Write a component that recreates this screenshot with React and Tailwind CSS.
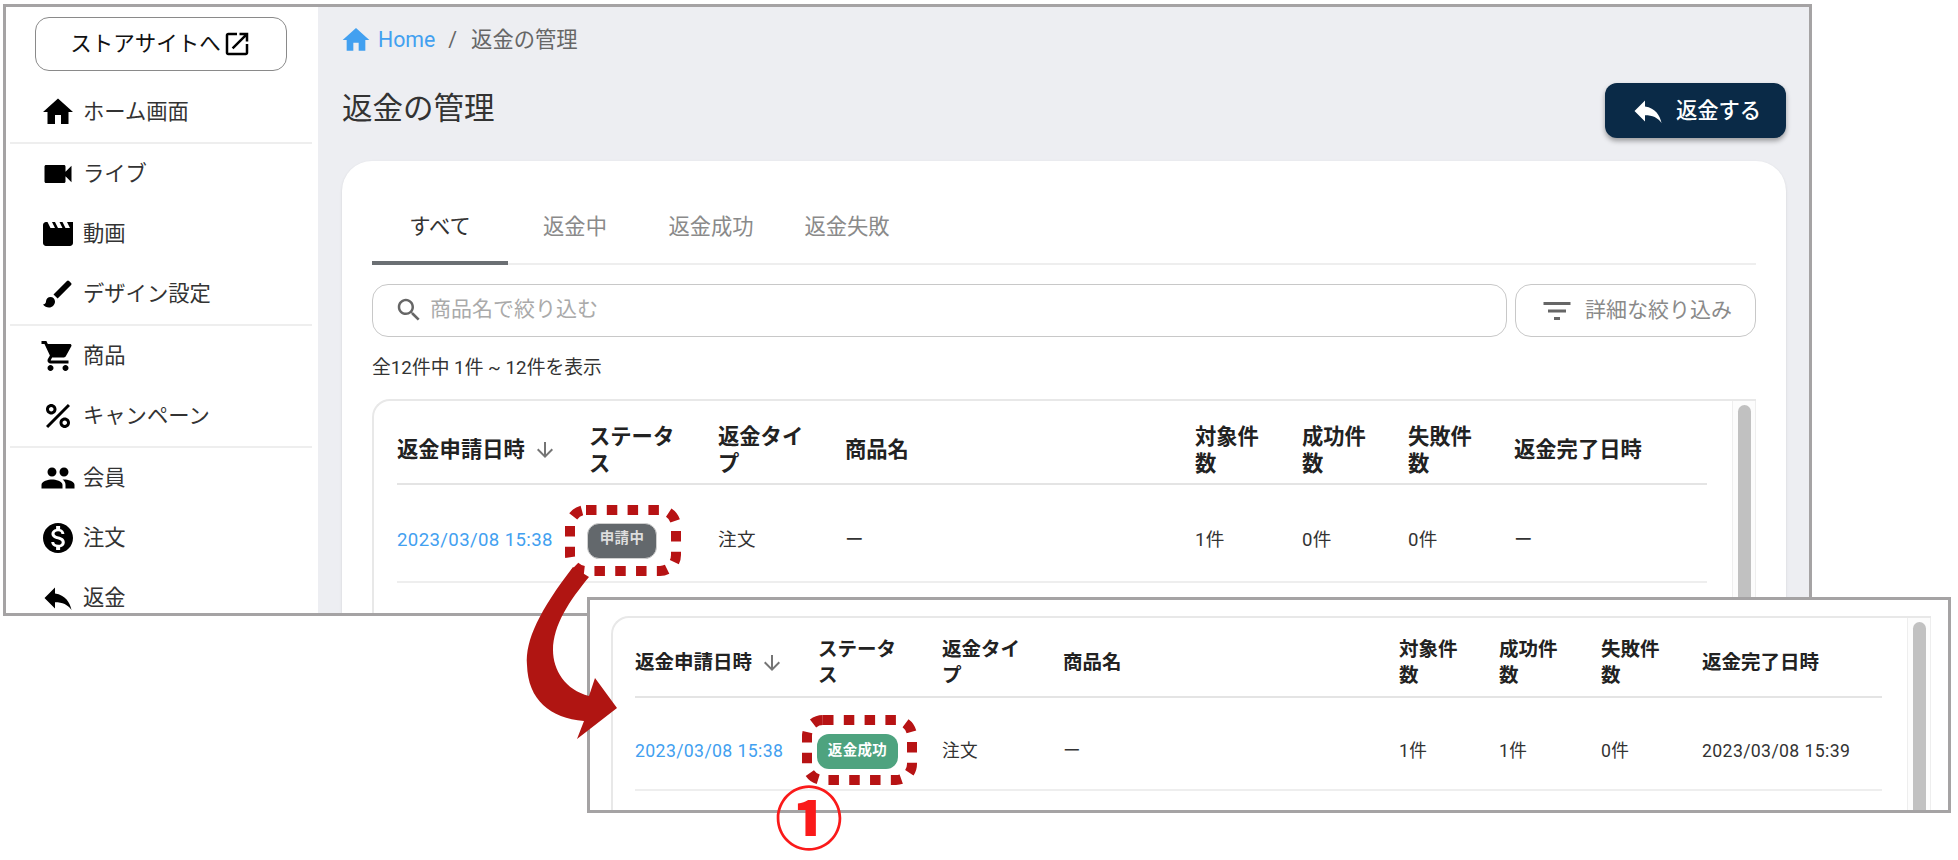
const paths = {
  home: 'M10 20v-6h4v6h5v-8h3L12 3 2 12h3v8z',
  video: 'M17 10.5V7c0-.55-.45-1-1-1H4c-.55 0-1 .45-1 1v10c0 .55.45 1 1 1h12c.55 0 1-.45 1-1v-3.5l4 4v-11l-4 4z',
  movie: 'M18 4l2 4h-3l-2-4h-2l2 4h-3l-2-4H8l2 4H7L5 4H4c-1.1 0-1.99.9-1.99 2L2 18c0 1.1.9 2 2 2h16c1.1 0 2-.9 2-2V4h-4z',
  brush: 'M7 14c-1.66 0-3 1.34-3 3 0 1.31-1.16 2-2 2 .92 1.22 2.49 2 4 2 2.21 0 4-1.79 4-4 0-1.66-1.34-3-3-3zm13.71-9.37l-1.34-1.34a.9959.9959 0 00-1.41 0L9 12.25 11.75 15l8.96-8.96c.39-.39.39-1.02 0-1.41z',
  cart: 'M7 18c-1.1 0-1.99.9-1.99 2S5.9 22 7 22s2-.9 2-2-.9-2-2-2zM1 2v2h2l3.6 7.59-1.35 2.45c-.16.28-.25.61-.25.96 0 1.1.9 2 2 2h12v-2H7.42c-.14 0-.25-.11-.25-.25l.03-.12.9-1.63h7.45c.75 0 1.41-.41 1.75-1.03l3.58-6.49c.08-.14.12-.31.12-.48 0-.55-.45-1-1-1H5.21l-.94-2H1zm16 16c-1.1 0-1.99.9-1.99 2s.89 2 1.99 2 2-.9 2-2-.9-2-2-2z',
  percent: 'M7.5 4C5.57 4 4 5.57 4 7.5S5.57 11 7.5 11 11 9.43 11 7.5 9.43 4 7.5 4zm0 5C6.67 9 6 8.33 6 7.5S6.67 6 7.5 6 9 6.67 9 7.5 8.33 9 7.5 9zm9 4c-1.93 0-3.5 1.57-3.5 3.5s1.57 3.5 3.5 3.5 3.5-1.57 3.5-3.5-1.57-3.5-3.5-3.5zm0 5c-.83 0-1.5-.67-1.5-1.5s.67-1.5 1.5-1.5 1.5.67 1.5 1.5-.67 1.5-1.5 1.5zM5.41 20L4 18.59 18.59 4 20 5.41 5.41 20z',
  people: 'M16 11c1.66 0 2.99-1.34 2.99-3S17.66 5 16 5c-1.66 0-3 1.34-3 3s1.34 3 3 3zm-8 0c1.66 0 2.99-1.34 2.99-3S9.66 5 8 5C6.34 5 5 6.34 5 8s1.34 3 3 3zm0 2c-2.33 0-7 1.17-7 3.5V19h14v-2.5c0-2.33-4.67-3.5-7-3.5zm8 0c-.29 0-.62.02-.97.05 1.16.84 1.97 1.97 1.97 3.45V19h6v-2.5c0-2.33-4.67-3.5-7-3.5z',
  money: 'M12 2C6.48 2 2 6.48 2 12s4.48 10 10 10 10-4.48 10-10S17.52 2 12 2zm1.41 16.09V20h-2.67v-1.93c-1.71-.36-3.16-1.46-3.27-3.4h1.96c.1 1.05.82 1.87 2.65 1.87 1.96 0 2.4-.98 2.4-1.59 0-.83-.44-1.61-2.67-2.14-2.48-.6-4.18-1.62-4.18-3.67 0-1.72 1.39-2.84 3.11-3.21V4h2.67v1.95c1.86.45 2.79 1.86 2.85 3.39H14.3c-.05-1.11-.64-1.87-2.22-1.87-1.5 0-2.4.68-2.4 1.64 0 .84.65 1.39 2.67 1.91s4.18 1.39 4.18 3.91c-.01 1.83-1.38 2.83-3.12 3.16z',
  reply: 'M10 9V5l-7 7 7 7v-4.1c5 0 8.5 1.6 11 5.1-1-5-4-10-11-11z',
  open: 'M19 19H5V5h7V3H5c-1.11 0-2 .9-2 2v14c0 1.1.89 2 2 2h14c1.1 0 2-.9 2-2v-7h-2v7zM14 3v2h3.59l-9.83 9.83 1.41 1.41L19 6.41V10h2V3h-7z',
  search: 'M15.5 14h-.79l-.28-.27C15.41 12.59 16 11.11 16 9.5 16 5.91 13.09 3 9.5 3S3 5.91 3 9.5 5.91 16 9.5 16c1.61 0 3.09-.59 4.23-1.57l.27.28v.79l5 4.99L20.49 19l-4.99-5zm-6 0C7.01 14 5 11.99 5 9.5S7.01 5 9.5 5 14 7.01 14 9.5 11.99 14 9.5 14z',
  filter: 'M10 18h4v-2h-4v2zM3 6v2h18V6H3zm3 7h12v-2H6v2z',
  down: 'M20 12l-1.41-1.41L13 16.17V4h-2v12.17l-5.58-5.59L4 12l8 8 8-8z',
};

function Icon({ name, className }) {
  return (
    <svg viewBox="0 0 24 24" fill="currentColor" className={className}>
      <path d={paths[name]} />
    </svg>
  );
}

const menu = [
  [['home', 'ホーム画面']],
  [['video', 'ライブ'], ['movie', '動画'], ['brush', 'デザイン設定']],
  [['cart', '商品'], ['percent', 'キャンペーン']],
  [['people', '会員'], ['money', '注文'], ['reply', '返金']],
];

function Sidebar() {
  return (
    <div className="w-[312px] shrink-0 bg-white">
      <div className="ml-[29px] mt-[10px] mb-[11px] flex h-[54px] w-[252px] items-center justify-center rounded-[14px] border border-[#8a8a8a] text-[21.5px] text-[#111]">
        ストアサイトへ
        <Icon name="open" className="ml-[1px] h-[30px] w-[30px] text-black" />
      </div>
      {menu.map((group, i) => (
        <div key={i} className={i < menu.length - 1 ? 'relative mb-[2px] after:absolute after:left-[4px] after:right-[6px] after:bottom-[-2px] after:h-[2px] after:bg-[#eeeeee]' : ''}>
          {group.map(([icon, label]) => (
            <div key={label} className="flex h-[60px] items-center gap-[7px] pl-[34px] text-[21.3px] text-[#333]">
              <Icon name={icon} className="h-[36px] w-[36px] text-black" />
              {label}
            </div>
          ))}
        </div>
      ))}
    </div>
  );
}

function Scrollbar() {
  return (
    <div className="h-[500px] w-[24px] shrink-0 border-x border-[#eeeeee] bg-[#fcfcfc] pt-[4px]">
      <div className="mx-auto h-[490px] w-[13px] rounded-full bg-[#c1c1c1]" />
    </div>
  );
}

function Badge({ className, children }) {
  return <span className={`inline-flex items-center justify-center rounded-[12px] font-bold ${className}`}>{children}</span>;
}

function RefundTable({ cols, headH, rowH, headText, cellText, status, counts, done }) {
  const heads = ['ステータス', '返金タイプ', '商品名', '対象件数', '成功件数', '失敗件数', '返金完了日時'];
  return (
    <div className="flex h-[500px] rounded-tl-[18px] border-2 border-r-0 border-[#e8e8e8]">
      <div className="flex-1 pl-[23px] pr-[25px]">
        <div className={`grid items-center border-b-2 border-[#e4e4e4] font-bold text-[#222] ${cols} ${headH} ${headText}`}>
          <div className="flex items-center gap-[8px]">
            返金申請日時
            <Icon name="down" className="h-[24px] w-[24px] text-[#757575]" />
          </div>
          {heads.map((h) => (
            <div key={h} className="pr-[30px]">{h}</div>
          ))}
        </div>
        <div className={`grid items-center border-b-2 border-[#eeeeee] text-[#333] ${cols} ${rowH} ${cellText}`}>
          <div className="text-[#42a0f0]">2023/03/08 15:38</div>
          <div className="flex">{status}</div>
          <div>注文</div>
          <div>ー</div>
          {counts.map((c, i) => (
            <div key={i}>{c}</div>
          ))}
          <div>{done}</div>
        </div>
      </div>
      <Scrollbar />
    </div>
  );
}

function MainWindow() {
  return (
    <div className="absolute left-[3px] top-[4px] flex h-[612px] w-[1809px] overflow-hidden border-[3px] border-[#a5a3a4] bg-white">
      <Sidebar />
      <div className="flex-1 bg-[#edeef2] pl-[24px] pr-[23px]">
        <div className="flex h-[66px] items-center text-[21.3px]">
          <Icon name="home" className="ml-[-2px] h-[32px] w-[32px] text-[#42a0f0]" />
          <span className="ml-[6px] text-[#42a0f0]">Home</span>
          <span className="ml-[13px] text-[#666]">/</span>
          <span className="ml-[14px] text-[#666]">返金の管理</span>
        </div>
        <div className="mt-[10px] flex h-[55px] items-center justify-between">
          <h1 className="pb-[4px] text-[30.5px] font-normal text-[#333]">返金の管理</h1>
          <button className="flex h-[55px] w-[181px] items-center justify-center gap-[10px] rounded-[12px] bg-[#0a2a47] text-[21.3px] font-medium text-white shadow-[0_3px_5px_rgba(0,0,0,0.35)]">
            <Icon name="reply" className="h-[36px] w-[36px]" />
            返金する
          </button>
        </div>
        <div className="mt-[23px] h-[600px] rounded-[30px] bg-white px-[30px] shadow-sm">
          <div className="flex h-[104px] border-b-2 border-[#eeeeee] text-[21.3px] text-[#8a8a8a]">
            <div className="relative flex h-[102px] w-[136px] items-center justify-center pt-[30px] text-[#333] after:absolute after:inset-x-0 after:bottom-[-2px] after:h-[4px] after:bg-[#6b6f73]">すべて</div>
            <div className="flex w-[134px] items-center justify-center pt-[30px]">返金中</div>
            <div className="flex w-[138px] items-center justify-center pt-[30px]">返金成功</div>
            <div className="flex w-[134px] items-center justify-center pt-[30px]">返金失敗</div>
          </div>
          <div className="mt-[19px] flex h-[53px] gap-[8px]">
            <div className="flex flex-1 items-center rounded-[16px] border border-[#c8c8c8] pb-[2px] pl-[21px] text-[21px] text-[#aaaaaa]">
              <Icon name="search" className="mr-[6px] h-[30px] w-[30px] text-[#666]" />
              商品名で絞り込む
            </div>
            <div className="flex w-[241px] items-center justify-center gap-[10px] rounded-[16px] border border-[#c8c8c8] text-[21px] text-[#8a8a8a]">
              <Icon name="filter" className="h-[36px] w-[36px] text-[#666]" />
              詳細な絞り込み
            </div>
          </div>
          <div className="flex h-[62px] items-center text-[18.8px] text-[#333]">全12件中 1件 ~ 12件を表示</div>
          <RefundTable
            cols="grid-cols-[192px_129px_127px_350px_107px_106px_106px_1fr]"
            headH="h-[84px] pt-[15px]"
            rowH="h-[98px] pt-[15px]"
            headText="text-[21.3px] leading-[27px]"
            cellText="text-[18.6px] tracking-[0.02em]"
            status={<Badge className="ml-[-2px] h-[36px] w-[70px] border border-[#d0d0d0] bg-[#63686c] pb-[3px] text-[14.5px] text-[#dddddd]">申請中</Badge>}
            counts={['1件', '0件', '0件']}
            done="ー"
          />
        </div>
      </div>
    </div>
  );
}

function ResultWindow() {
  return (
    <div className="absolute left-[587px] top-[597px] h-[216px] w-[1364px] overflow-hidden border-[3px] border-[#a5a3a4] bg-white pl-[21px] pr-[17px] pt-[16px]">
      <RefundTable
        cols="grid-cols-[183px_124px_121px_336px_100px_102px_101px_1fr]"
        headH="h-[80px] pt-[11px] -ml-[1px]"
        rowH="h-[93px] pt-[15px] -ml-[1px]"
        headText="text-[19.5px] leading-[26px]"
        cellText="text-[17.7px] tracking-[0.02em]"
        status={<Badge className="ml-[-1px] h-[35px] w-[81px] bg-[#4ea37f] text-[14.5px] text-white">返金成功</Badge>}
        counts={['1件', '1件', '0件']}
        done="2023/03/08 15:39"
      />
    </div>
  );
}

function Annotations() {
  return (
    <>
      <svg viewBox="0 0 1958 860" className="absolute inset-0 h-[860px] w-[1958px]" fill="none">
        <rect x="570" y="510" width="106" height="61" rx="16" stroke="#b71314" strokeWidth="10" strokeDasharray="10.5 10.3" />
        <rect x="807" y="720" width="105" height="60" rx="16" stroke="#b71314" strokeWidth="10" strokeDasharray="10.5 10.3" />
        <path d="M573 567C540 610 525 640 527 665C528 700 550 718 584 721L577 739L617 708L595 678L589 696C565 690 553 670 553 650C553 625 570 600 589 577Z" fill="#b01512" />
      </svg>
      <span className="absolute left-[769px] top-[781px] flex h-[80px] w-[80px] items-center justify-center text-[68px] font-black leading-[80px] text-[#fa1a1a]">①</span>
    </>
  );
}

export default function App() {
  return (
    <div className="relative h-[860px] w-[1958px] overflow-hidden bg-white font-[Roboto,'Noto_Sans_CJK_JP',sans-serif]">
      <MainWindow />
      <ResultWindow />
      <Annotations />
    </div>
  );
}
